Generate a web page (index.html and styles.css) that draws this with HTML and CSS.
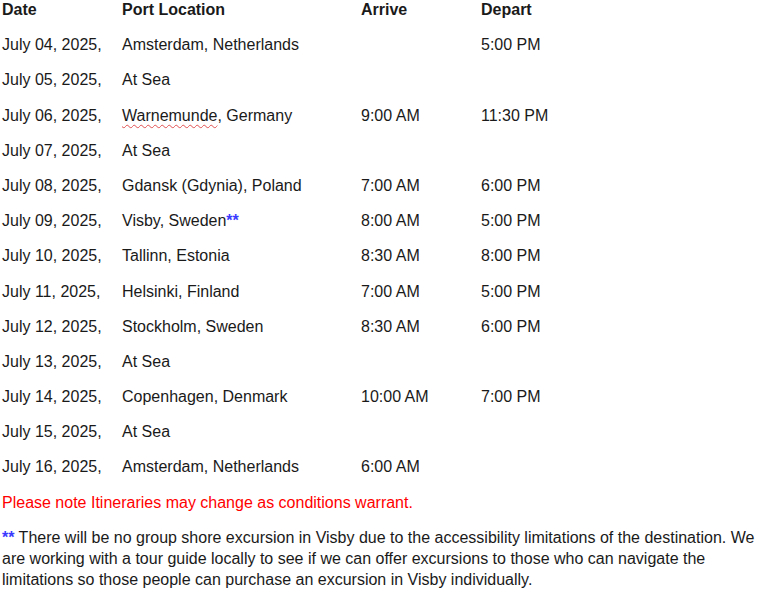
FILE: index.html
```html
<!DOCTYPE html>
<html>
<head>
<meta charset="utf-8">
<link rel="stylesheet" href="styles.css">
</head>
<body>
<div class="page">
  <div class="table">
    <div class="row head"><span>Date</span><span>Port Location</span><span>Arrive</span><span>Depart</span></div>
    <div class="row"><span>July 04, 2025,</span><span>Amsterdam, Netherlands</span><span></span><span>5:00 PM</span></div>
    <div class="row"><span>July 05, 2025,</span><span>At Sea</span><span></span><span></span></div>
    <div class="row"><span>July 06, 2025,</span><span><span class="spell">Warnemunde</span>, Germany</span><span>9:00 AM</span><span>11:30 PM</span></div>
    <div class="row"><span>July 07, 2025,</span><span>At Sea</span><span></span><span></span></div>
    <div class="row"><span>July 08, 2025,</span><span>Gdansk (Gdynia), Poland</span><span>7:00 AM</span><span>6:00 PM</span></div>
    <div class="row"><span>July 09, 2025,</span><span>Visby, Sweden<span class="star">**</span></span><span>8:00 AM</span><span>5:00 PM</span></div>
    <div class="row"><span>July 10, 2025,</span><span>Tallinn, Estonia</span><span>8:30 AM</span><span>8:00 PM</span></div>
    <div class="row"><span>July 11, 2025,</span><span>Helsinki, Finland</span><span>7:00 AM</span><span>5:00 PM</span></div>
    <div class="row"><span>July 12, 2025,</span><span>Stockholm, Sweden</span><span>8:30 AM</span><span>6:00 PM</span></div>
    <div class="row"><span>July 13, 2025,</span><span>At Sea</span><span></span><span></span></div>
    <div class="row"><span>July 14, 2025,</span><span>Copenhagen, Denmark</span><span>10:00 AM</span><span>7:00 PM</span></div>
    <div class="row"><span>July 15, 2025,</span><span>At Sea</span><span></span><span></span></div>
    <div class="row"><span>July 16, 2025,</span><span>Amsterdam, Netherlands</span><span>6:00 AM</span><span></span></div>
  </div>
  <p class="note">Please note Itineraries may change as conditions warrant.</p>
  <p class="foot"><span class="star">**</span> There will be no group shore excursion in Visby due to the accessibility limitations of the destination. We<br>are working with a tour guide locally to see if we can offer excursions to those who can navigate the<br>limitations so those people can purchase an excursion in Visby individually.</p>
</div>
</body>
</html>
```

FILE: styles.css
```css
html, body {
  margin: 0;
  padding: 0;
  background: #ffffff;
}
.page {
  padding-left: 2px;
  padding-top: 1px;
  font-family: "Liberation Sans", Arial, sans-serif;
  font-size: 16px;
  color: #1a1a1a;
}
.row {
  display: grid;
  grid-template-columns: 120px 239px 120px 1fr;
  height: 35.2px;
  line-height: 18px;
  white-space: nowrap;
}
.head {
  font-weight: 700;
}
.spell {
  text-decoration: underline wavy #e05050;
  text-decoration-thickness: 1px;
  text-underline-offset: 3px;
}
.star {
  color: #3a3aff;
  font-weight: 700;
}
.note {
  margin: 0;
  height: 33.2px;
  line-height: 18px;
  color: #ff0000;
}
.foot {
  margin: 0;
  line-height: 21px;
  white-space: nowrap;
}
```
